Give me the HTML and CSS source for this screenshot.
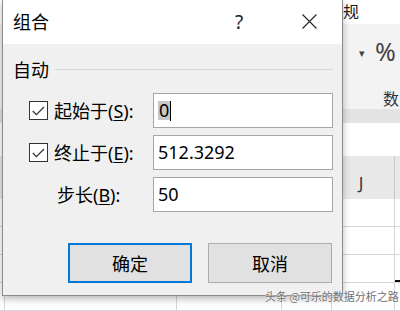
FILE: index.html
```html
<!DOCTYPE html>
<html lang="zh-CN">
<head>
<meta charset="utf-8">
<link rel="stylesheet" href="styles.css">
</head>
<body>
<div class="sheet">
  <div class="rb-top"><span class="rb-fmt">常规</span></div>
  <div class="ribbon">
    <div class="fmt-row"><span class="dd">▾</span><span class="pct">%</span></div>
    <div class="grp-label">数</div>
  </div>
  <div class="band"></div>
  <div class="fbar"></div>
  <div class="colhead">
    <div class="c c0"></div><div class="c c1"></div><div class="c c2"></div><div class="c c3"></div><div class="c c4">J</div><div class="c c5"></div>
  </div>
  <div class="grid">
    <div class="row"><div class="c c0"></div><div class="c c1"></div><div class="c c2"></div><div class="c c3"></div><div class="c c4"></div><div class="c c5"></div></div>
    <div class="row"><div class="c c0"></div><div class="c c1"></div><div class="c c2"></div><div class="c c3"></div><div class="c c4"></div><div class="c c5"></div></div>
    <div class="row"><div class="c c0"></div><div class="c c1"></div><div class="c c2"></div><div class="c c3"></div><div class="c c4"></div><div class="c c5 sel"></div></div>
    <div class="row"><div class="c c0"></div><div class="c c1"></div><div class="c c2"></div><div class="c c3"></div><div class="c c4"></div><div class="c c5"></div></div>
  </div>

  <div class="dialog">
    <div class="titlebar">
      <div class="title">组合</div>
      <div class="tb-btn help">?</div>
      <div class="tb-btn close">
        <svg width="15" height="15" viewBox="0 0 15 15"><path d="M0.5 0.5 L14.5 14.5 M14.5 0.5 L0.5 14.5" stroke="#222" stroke-width="1.1" fill="none"/></svg>
      </div>
    </div>
    <div class="body">
      <div class="group-head"><span class="group-title">自动</span><span class="group-line"></span></div>
      <div class="rows">
        <div class="frow">
          <div class="cbwrap"><span class="cb"><svg width="17" height="17" viewBox="0 0 17 17"><path d="M2.8 9 L6.4 12.6 L14 5" stroke="#333" stroke-width="1.3" fill="none"/></svg></span></div>
          <div class="lbl">起始于(<u>S</u>):</div>
          <div class="inp"><span class="seltext">0</span><span class="caret"></span></div>
        </div>
        <div class="frow">
          <div class="cbwrap"><span class="cb"><svg width="17" height="17" viewBox="0 0 17 17"><path d="M2.8 9 L6.4 12.6 L14 5" stroke="#333" stroke-width="1.3" fill="none"/></svg></span></div>
          <div class="lbl">终止于(<u>E</u>):</div>
          <div class="inp">512.3292</div>
        </div>
        <div class="frow">
          <div class="cbwrap"></div>
          <div class="lbl lbl-step">步长(<u>B</u>):</div>
          <div class="inp">50</div>
        </div>
      </div>
      <div class="btns">
        <div class="btn primary">确定</div>
        <div class="btn">取消</div>
      </div>
    </div>
  </div>

  <div class="watermark">头条 @可乐的数据分析之路</div>
</div>
</body>
</html>
```

FILE: styles.css
```css
* { box-sizing: border-box; }
html, body { margin: 0; padding: 0; }
body {
  width: 400px;
  height: 311px;
  overflow: hidden;
  font-family: "Noto Sans", "Noto Sans CJK SC", sans-serif;
  color: #000;
}
.sheet {
  position: relative;
  width: 400px;
  height: 311px;
  background: #fff;
  display: flex;
  flex-direction: column;
  overflow: hidden;
}
.rb-top {
  height: 25px;
  background: #fff;
  padding-left: 327px;
  font-family: "Noto Sans CJK SC", sans-serif;
  font-size: 16px;
  line-height: 23px;
  color: #1a1a1a;
}
.ribbon {
  height: 90px;
  background: #f3f3f3;
  display: flex;
  flex-direction: column;
}
.fmt-row {
  margin-top: 14px;
  height: 26px;
  padding-left: 359px;
  display: flex;
  align-items: center;
  color: #444;
}
.dd { font-size: 11px; width: 16px; margin-top: 4px; }
.pct { font-size: 25px; line-height: 26px; }
.grp-label {
  margin-top: 23px;
  padding-left: 383px;
  font-family: "Noto Sans CJK SC", sans-serif;
  font-size: 16px;
  line-height: 22px;
  color: #333;
  white-space: nowrap;
}
.band { height: 15px; background: #e3e3e3; }
.fbar { height: 35px; background: #fff; }
.colhead {
  height: 45px;
  background: #e8e8e8;
  display: flex;
}
.c { border-right: 1px solid #c8c8c8; height: 100%; }
.c0 { width: 5px; }
.c1 { width: 172px; }
.c2 { width: 105px; }
.c3 { width: 50px; }
.c4 { width: 63px; }
.c5 { width: 5px; border-right: none; }
.colhead .c4 {
  display: flex;
  align-items: flex-end;
  justify-content: center;
  padding-bottom: 5px;
  font-size: 17px;
  color: #333;
  padding-right: 4px;
}
.grid { display: flex; flex-direction: column; }
.row { height: 28px; display: flex; border-bottom: 1px solid #d6d6d6; }
.row .c { border-right-color: #d6d6d6; }
.sel { border-bottom: 2px solid #111; }

/* dialog */
.dialog {
  position: absolute;
  left: 2px;
  top: 0;
  width: 341px;
  height: 296px;
  border: 1px solid #8c8c8c;
  border-top: none;
  background: #f0f0f0;
  box-shadow: 0 3px 7px rgba(0,0,0,0.28);
  display: flex;
  flex-direction: column;
  font-family: "Noto Sans", "Noto Sans CJK SC", sans-serif;
}
.titlebar {
  height: 44px;
  background: #fff;
  display: flex;
  align-items: center;
  padding-left: 10px;
  padding-right: 10px;
}
.title {
  flex: 1;
  font-family: "Noto Sans CJK SC", sans-serif;
  font-size: 18px;
  line-height: 24px;
  margin-top: -2px;
}
.tb-btn {
  width: 46px;
  height: 44px;
  display: flex;
  align-items: center;
  justify-content: center;
}
.help { font-size: 19px; color: #222; margin-right: 24px; margin-top: -1px; }
.close { margin-top: -1px; }
.body {
  flex: 1;
  padding: 13px 9px 0 10px;
  display: flex;
  flex-direction: column;
}
.group-head {
  display: flex;
  align-items: center;
  height: 24px;
}
.group-title {
  font-family: "Noto Sans CJK SC", sans-serif;
  font-size: 18px;
  line-height: 24px;
}
.group-line {
  flex: 1;
  height: 1px;
  background: #d7d7d7;
  margin-left: 6px;
}
.rows {
  margin-top: 12px;
  display: flex;
  flex-direction: column;
  gap: 7px;
}
.frow {
  display: flex;
  align-items: center;
  height: 35px;
}
.cbwrap {
  width: 41px;
  padding-left: 16px;
  display: flex;
  align-items: center;
}
.cb {
  width: 19px;
  height: 19px;
  border: 1px solid #333;
  background: #fff;
  display: flex;
  align-items: center;
  justify-content: center;
}
.cb svg { display: block; }
.lbl {
  width: 99px;
  font-size: 18px;
  line-height: 24px;
  white-space: nowrap;
}
.lbl u { text-underline-offset: 2px; text-decoration-thickness: 1px; }
.lbl-step { padding-left: 3px; }
.inp {
  width: 180px;
  height: 35px;
  border: 1px solid #a6a6a6;
  background: #fff;
  padding-left: 4px;
  font-size: 18px;
  line-height: 33px;
  display: flex;
  align-items: center;
}
.seltext {
  background: #c8c8c8;
  line-height: 19px;
  padding: 0 1px;
}
.caret {
  width: 1px;
  height: 20px;
  background: #000;
}
.btns {
  margin-top: 31px;
  display: flex;
  justify-content: flex-end;
  gap: 16px;
  padding-right: 1px;
}
.btn {
  width: 124px;
  height: 40px;
  border: 1px solid #adadad;
  background: #e1e1e1;
  display: flex;
  align-items: center;
  justify-content: center;
  font-family: "Noto Sans CJK SC", sans-serif;
  font-size: 18px;
}
.btn.primary { border: 2px solid #0078d7; }

.watermark {
  position: absolute;
  left: 265px;
  top: 289px;
  font-family: "Noto Sans CJK SC", sans-serif;
  font-size: 11px;
  line-height: 14px;
  color: #6e6e6e;
  text-shadow: 0 0 1px #fff, 0 0 2px #fff;
  white-space: nowrap;
}
```
